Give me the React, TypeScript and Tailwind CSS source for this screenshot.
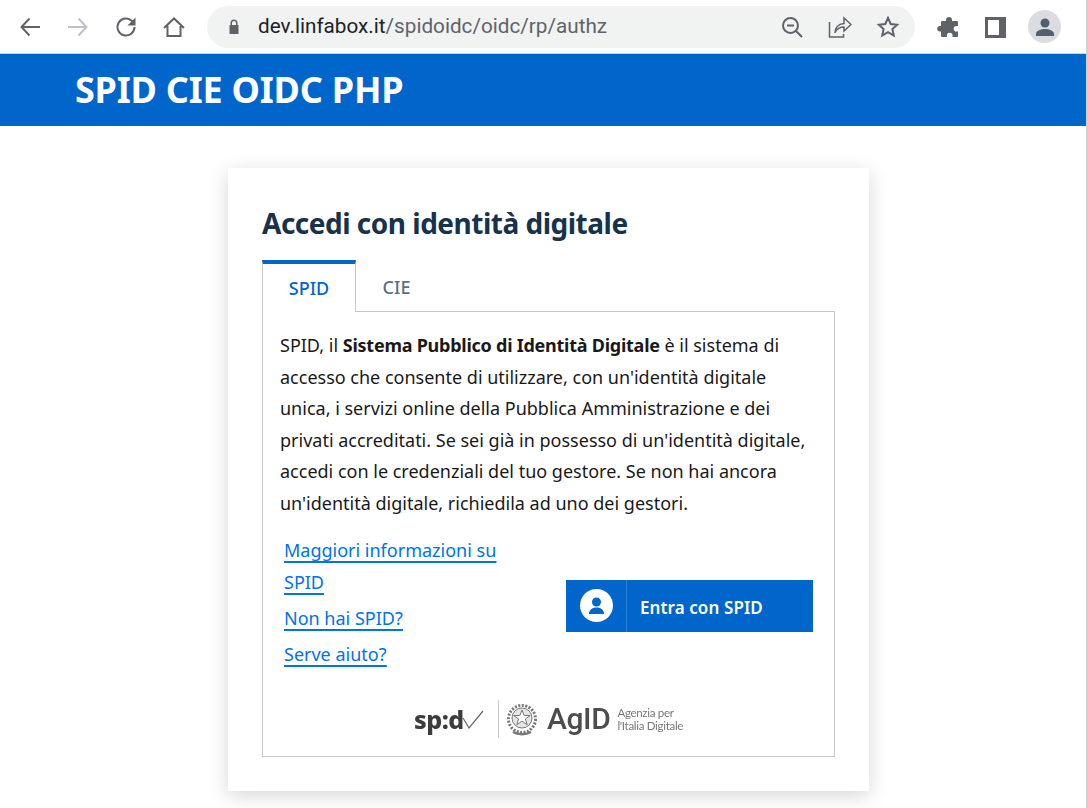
import React from "react";

function Toolbar() {
  return (
    <div className="flex h-[54px] items-center border-b border-[#bcd6f0] bg-white">
      <div className="flex w-[207px] items-center text-[#5f6368]">
        <svg className="ml-[18px]" width="24" height="24" viewBox="0 0 24 24" fill="none" stroke="#5f6368" strokeWidth="2"><path d="M22 12H4M11.5 3.500 3.500 12l8 8.500" /></svg>
        <svg className="ml-[24px]" width="24" height="24" viewBox="0 0 24 24" fill="none" stroke="#bdc1c6" strokeWidth="2"><path d="M2 12h18M12.500 3.500l8 8.500-8 8.500" /></svg>
        <svg className="ml-[24px]" width="24" height="24" viewBox="0 0 24 24" fill="none" stroke="#5f6368" strokeWidth="2"><path d="M20.500 12a8.500 8.500 0 1 1-2.500-6l2 2" /><path d="M21.500 2.500v8h-8z" fill="#5f6368" stroke="none" /></svg>
        <svg className="ml-[24px]" width="24" height="24" viewBox="0 0 24 24" fill="none" stroke="#5f6368" strokeWidth="2"><path d="M2 13 12 3.500 22 13M5.500 11v10h13V11" /></svg>
      </div>
      <div className="flex h-[42px] w-[708px] items-center rounded-full bg-[#f1f3f3]">
        <svg className="ml-[18px]" width="18" height="18" viewBox="0 0 18 18" fill="#5f6368"><path d="M5.500 7V5a3.500 3.500 0 0 1 7 0v2h1v9h-9V7zm1.500 0h4V5a2 2 0 0 0-4 0z" /></svg>
        <div className="ml-[15px] font-['Roboto',sans-serif] text-[20.7px] text-[#5f6368]"><span className="text-[#202124]">dev.linfabox.it</span>/spidoidc/oidc/rp/authz</div>
        <div className="ml-auto flex items-center">
          <svg width="24" height="24" viewBox="0 0 24 24" fill="none" stroke="#5f6368" strokeWidth="2"><circle cx="10.500" cy="10.500" r="7.500" /><path d="M16 16l6 6M7 10.500h7" /></svg>
          <svg className="ml-[24px]" width="24" height="24" viewBox="0 0 24 24" fill="none" stroke="#5f6368" strokeWidth="1.500"><path d="M1.500 7v15h14v-3" /><path d="M7 18c0-5 3-9 9-9.500V3l7 6.500-7 6.500v-4c-4 0-7 1.500-9 5.500z" /></svg>
          <svg className="ml-[24px] mr-[15px]" width="24" height="24" viewBox="0 0 24 24" fill="none" stroke="#5f6368" strokeWidth="2"><path d="m12 3 2.700 6 6.500.7-4.800 4.400 1.400 6.400-5.800-3.300-5.800 3.300 1.400-6.400-4.800-4.400 6.500-.7z" /></svg>
        </div>
      </div>
      <div className="flex flex-1 items-center">
        <svg className="ml-[22px]" width="24" height="24" viewBox="0 0 24 24" fill="#5f6368"><path d="M9 5a3 3 0 0 1 6 0v1h5a1 1 0 0 1 1 1v4h-1.500a2.800 2.800 0 0 0 0 5.600H21V21a1 1 0 0 1-1 1h-4.500v-1.500a2.800 2.800 0 0 0-5.600 0V22H5a1 1 0 0 1-1-1v-4.500H3a2.800 2.800 0 0 1 0-5.600h1V7a1 1 0 0 1 1-1h4z" /></svg>
        <svg className="ml-[22px]" width="24" height="24" viewBox="0 0 24 24" fill="#5f6368"><path fillRule="evenodd" d="M2 2h21v21H2zm3 3v15h11V5z" /></svg>
        <div className="ml-[21px] flex h-[33px] w-[33px] items-center justify-center rounded-full bg-[#dadce0]">
          <svg width="24" height="24" viewBox="0 0 24 24" fill="#51606f"><circle cx="12" cy="8" r="4.500" /><path d="M3 21v-2c0-3.500 5-5 9-5s9 1.500 9 5v2z" /></svg>
        </div>
      </div>
    </div>
  );
}

function Logos() {
  return (
    <div className="mt-[30px] flex items-center pl-[134px] text-[#4a4a4a] blur-[0.4px]">
      <div className="flex w-[72px] items-center">
        <span className="font-['Noto_Sans',sans-serif] text-[25px] leading-none font-extrabold tracking-[-0.5px] text-[#3c3c3c]">sp:d</span>
        <svg width="22" height="24" viewBox="0 0 22 24" fill="none" stroke="#666" strokeWidth="1.200" className="ml-[-2px]"><path d="M1 11l6 10L21 4" /></svg>
      </div>
      <div className="ml-[12px] h-[38px] w-px bg-[#c8c8c8]" />
      <svg className="ml-[7px]" width="32" height="36" viewBox="0 0 32 36" fill="none" stroke="#777">
        <circle cx="16" cy="18" r="13.500" strokeWidth="3" strokeDasharray="2 1.500" />
        <circle cx="16" cy="17" r="10" strokeWidth="1" fill="#e6e6e6" />
        <path d="m16 9 2.200 5.500h6l-4.800 3.500 1.800 5.700-5.200-3.500-5.200 3.500 1.800-5.700-4.800-3.500h6z" strokeWidth="1" fill="#fff" />
        <path d="M7 31c5 3 13 3 18 0" strokeWidth="2.500" />
      </svg>
      <span className="ml-[9px] font-['Roboto',sans-serif] text-[30px] leading-none font-medium tracking-[-0.4px] text-[#4d4d4d]">AgID</span>
      <div className="ml-[7px] font-['Lato',sans-serif] text-[11.5px] leading-[13px] tracking-[-0.3px] whitespace-nowrap text-[#777]">Agenzia per<br />l'Italia Digitale</div>
    </div>
  );
}

export default function App() {
  return (
    <div className="h-[808px] w-[1088px] overflow-hidden border-r-2 border-[#d0d0d0] bg-white font-['Noto_Sans',sans-serif]">
      <Toolbar />
      <header className="flex h-[72px] items-center bg-[#0066cc] pl-[75px]">
        <h1 className="text-[36px] font-bold tracking-[-0.22px] text-white">SPID CIE OIDC PHP</h1>
      </header>
      <main className="flex justify-center pt-[42px] pl-[11px]">
        <section className="h-[623px] w-[641px] bg-white px-[34px] pt-[35px] shadow-[0_5px_20px_rgba(0,0,0,0.16)]">
          <h2 className="h-[57px] text-[28px] leading-[40px] font-bold tracking-[-0.5px] text-[#17324d]">Accedi con identità digitale</h2>
          <div className="flex h-[52px]">
            <div className="flex w-[94px] items-center justify-center border-x border-t-4 border-x-[#c5c7c9] border-t-[#0066cc] bg-white text-[18px] font-medium text-[#0066cc]">SPID</div>
            <div className="flex w-[81px] items-center justify-center border-b border-[#c5c7c9] pt-[3px] text-[18px] font-medium text-[#5c6f82]">CIE</div>
            <div className="flex-1 border-b border-[#c5c7c9]" />
          </div>
          <div className="h-[445px] border border-t-0 border-[#c5c7c9] px-[17px] pt-[18px]">
            <p className="text-[18px] leading-[31.500px] text-[#19191a]">
              SPID, il <b className="tracking-[-0.25px]">Sistema Pubblico di Identità Digitale</b> è il sistema di<br />
              accesso che consente di utilizzare, con un'identità digitale<br />
              unica, i servizi online della Pubblica Amministrazione e dei<br />
              privati accreditati. Se sei già in possesso di un'identità digitale,<br />
              accedi con le credenziali del tuo gestore. Se non hai ancora<br />
              un'identità digitale, richiedila ad uno dei gestori.
            </p>
            <div className="mt-[16px] flex items-center">
              <div className="w-[286px] pl-[4px] text-[18px] leading-[31.500px] text-[#0073e6] underline decoration-2 underline-offset-[4px]">
                <a className="block">Maggiori informazioni su<br />SPID</a>
                <a className="mt-[4.500px] block">Non hai SPID?</a>
                <a className="mt-[4.500px] block">Serve aiuto?</a>
              </div>
              <a className="mt-[6px] flex h-[52px] w-[247px] items-center bg-[#0066cc] text-[17px] font-semibold tracking-[0.1px] text-white">
                <span className="flex h-full w-[61px] items-center justify-center border-r border-[#2a7fd4]">
                  <svg width="33" height="33" viewBox="0 0 33 33"><circle cx="16.500" cy="16.500" r="16.500" fill="#fff" /><circle cx="16.500" cy="13" r="4.500" fill="#0066cc" /><path d="M9 25c0-4 3-6.500 7.500-6.500S24 21 24 25z" fill="#0066cc" /></svg>
                </span>
                <span className="ml-[13px] pt-[4px]">Entra con SPID</span>
              </a>
            </div>
            <Logos />
          </div>
        </section>
      </main>
    </div>
  );
}
